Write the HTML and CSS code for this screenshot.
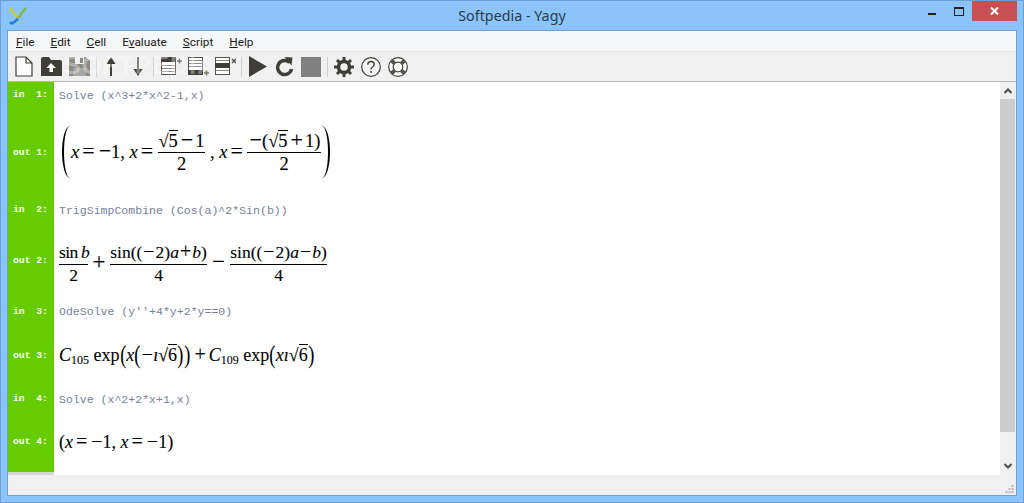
FILE: index.html
```html
<!DOCTYPE html>
<html lang="en">
<head>
<meta charset="utf-8">
<title>Softpedia - Yagy</title>
<link rel="stylesheet" href="styles.css">
</head>
<body>
<div class="window">
  <header class="titlebar">
    <svg class="app-icon" width="18" height="18" viewBox="0 0 18 18">
      <g fill="#d2c81f"><circle cx="2" cy="2.500" r="1.600"/><circle cx="4" cy="5" r="1.600"/><circle cx="6" cy="7.500" r="1.600"/><circle cx="8" cy="10" r="1.500"/></g>
      <g fill="#7db92c"><circle cx="16" cy="2" r="1.600"/><circle cx="14" cy="4.500" r="1.600"/><circle cx="12" cy="7" r="1.600"/><circle cx="10.500" cy="9.500" r="1.500"/></g>
      <g fill="#1f7fe0"><circle cx="8" cy="12.500" r="1.600"/><circle cx="6" cy="14.500" r="1.600"/><circle cx="3.500" cy="16" r="1.700"/><circle cx="1.800" cy="16" r="1.300"/></g>
    </svg>
    <span class="title">Softpedia - Yagy</span>
    <div class="controls">
      <span class="win-min"></span>
      <span class="win-max"></span>
      <span class="win-close"><svg width="9" height="8" viewBox="0 0 9 8"><path d="M1 0.500 L8 7.500 M8 0.500 L1 7.500" stroke="#fff" stroke-width="2" fill="none"/></svg></span>
    </div>
  </header>
  <div class="client">
    <nav class="menubar">
      <span><u>F</u>ile</span><span><u>E</u>dit</span><span><u>C</u>ell</span><span>E<u>v</u>aluate</span><span><u>S</u>cript</span><span><u>H</u>elp</span>
    </nav>
    <div class="toolbar">
      <svg class="tool t-new" width="18" height="21" viewBox="0 0 18 21"><path d="M1 1 H11 L17 7 V20 H1 Z M11 1 V7 H17" fill="#fff" stroke="#3f3e38" stroke-width="1.200"/></svg>
      <svg class="tool t-open" width="21" height="19" viewBox="0 0 21 19"><path d="M0 2 Q0 0 2 0 H8 L10 3 H19 Q21 3 21 5 V19 H0 Z" fill="#3f3e38"/><path d="M10 6 L15 11 H12 V15 H8.500 V11 H5.500 Z" fill="#fff"/></svg>
      <svg class="tool t-save" width="21" height="19" viewBox="0 0 21 19"><path d="M0 0 H17 L21 4 V19 H0 Z" fill="#8a8985"/><rect x="6" y="0" width="9" height="7" fill="#f0f0f0"/><rect x="11" y="1" width="3" height="5" fill="#8a8985"/><rect x="4" y="11" width="13" height="8" fill="#a8a7a3"/></svg>
      <i class="sep s1"></i>
      <svg class="tool t-up" width="10" height="19" viewBox="0 0 10 19"><path d="M5 0 L9.500 7 H6 V19 H4 V7 H0.500 Z" fill="#3f3e38"/></svg>
      <svg class="tool t-down" width="10" height="19" viewBox="0 0 10 19"><path d="M5 19 L9.500 12 H6 V0 H4 V12 H0.500 Z" fill="#3f3e38"/></svg>
      <i class="sep s2"></i>
      <svg class="tool t-a" width="21" height="19" viewBox="0 0 21 19"><rect x="0.500" y="0.500" width="14" height="17" fill="#fff" stroke="#55544e"/><rect x="0" y="0" width="15" height="5" fill="#3f3e38"/><path d="M1 8.500 H14 M1 11.500 H14 M1 14.500 H14" stroke="#8a8985"/><path d="M16 4 H21 M18.500 1.500 V6.500" stroke="#77766f" stroke-width="1.500"/></svg>
      <svg class="tool t-b" width="21" height="19" viewBox="0 0 21 19"><rect x="0.500" y="0.500" width="14" height="17" fill="#fff" stroke="#55544e"/><rect x="0" y="13" width="15" height="5" fill="#3f3e38"/><path d="M1 3.500 H14 M1 6.500 H14 M1 9.500 H14" stroke="#8a8985"/><path d="M16 16 H21 M18.500 13.500 V18.500" stroke="#77766f" stroke-width="1.500"/></svg>
      <svg class="tool t-c" width="21" height="19" viewBox="0 0 21 19"><rect x="0.500" y="0.500" width="14" height="17" fill="#fff" stroke="#55544e"/><rect x="0" y="6" width="15" height="5" fill="#3f3e38"/><path d="M1 3.500 H14 M1 13.500 H14" stroke="#8a8985"/><path d="M17 2 L21 6 M21 2 L17 6" stroke="#55544e" stroke-width="1.500"/></svg>
      <i class="sep s3"></i>
      <svg class="tool t-play" width="18" height="21" viewBox="0 0 18 21"><path d="M0 0 L18 10.500 L0 21 Z" fill="#3f3e38"/></svg>
      <svg class="tool t-redo" width="19" height="20" viewBox="0 0 19 20"><path d="M14.500 5.500 A7 7 0 1 0 16.500 12" fill="none" stroke="#3f3e38" stroke-width="3.500"/><path d="M9.500 0 L17.500 0.500 L16.500 8.500 Z" fill="#3f3e38"/></svg>
      <span class="tool t-stop"></span>
      <i class="sep s4"></i>
      <svg class="tool t-gear" width="20" height="20" viewBox="0 0 20 20"><circle cx="10" cy="10" r="5.500" fill="none" stroke="#3f3e38" stroke-width="3.500"/><g stroke="#3f3e38" stroke-width="3"><path d="M10 0 V4 M10 16 V20 M0 10 H4 M16 10 H20 M3 3 L5.800 5.800 M14.200 14.200 L17 17 M17 3 L14.200 5.800 M5.800 14.200 L3 17"/></g></svg>
      <svg class="tool t-help" width="20" height="20" viewBox="0 0 20 20"><circle cx="10" cy="10" r="9.300" fill="#fff" fill-opacity=".3" stroke="#3f3e38" stroke-width="1.200"/><path d="M6.800 7.800 Q6.800 4.500 10 4.500 Q13.200 4.500 13.200 7.300 Q13.200 9 11.500 10 Q10 10.800 10 12.600" fill="none" stroke="#3f3e38" stroke-width="1.400"/><rect x="9.200" y="14" width="1.600" height="1.800" fill="#3f3e38"/></svg>
      <svg class="tool t-ring" width="20" height="20" viewBox="0 0 20 20"><circle cx="10" cy="10" r="9.300" fill="#fff" stroke="#3f3e38" stroke-width="1.200"/><circle cx="10" cy="10" r="4.800" fill="#fff" stroke="#3f3e38" stroke-width="1.200"/><g stroke="#55544e" stroke-width="4"><path d="M3.400 3.400 L6.600 6.600 M16.600 3.400 L13.400 6.600 M3.400 16.600 L6.600 13.400 M16.600 16.600 L13.400 13.400"/></g></svg>
      <span class="watermark">SOFTPEDIA</span>
    </div>
    <div class="content">
      <div class="sheet">
        <div class="cells">
          <div class="cell h-in1"><span class="tag">in&nbsp;&nbsp;1:</span><code>Solve (x^3+2*x^2-1,x)</code></div>
          <div class="cell h-out1"><span class="tag">out 1:</span>
            <div class="math m1">
              <span class="paren paren-l"></span>
              <span class="run r1"><i>x</i><b class="o">=</b><b class="o u">−</b>1, <i>x</i><b class="o">=</b></span>
              <span class="frac f1"><span class="num"><span class="rad">√<span class="over">5</span></span><b class="o">−</b>1</span><span class="den">2</span></span>
              <span class="run r2">, <i>x</i><b class="o">=</b></span>
              <span class="frac f2"><span class="num"><b class="o u">−</b>(<span class="rad">√<span class="over">5</span></span><b class="o">+</b>1)</span><span class="den">2</span></span>
              <span class="paren paren-r"></span>
            </div>
          </div>
          <div class="cell h-in2"><span class="tag">in&nbsp;&nbsp;2:</span><code>TrigSimpCombine (Cos(a)^2*Sin(b))</code></div>
          <div class="cell h-out2"><span class="tag">out 2:</span>
            <div class="math m2">
              <span class="frac f3"><span class="num">sin <i>b</i></span><span class="den">2</span></span>
              <span class="op"><b class="o">+</b></span>
              <span class="frac f4"><span class="num">sin((<b class="o u">−</b>2)<i>a</i><b class="o">+</b><i>b</i>)</span><span class="den">4</span></span>
              <span class="op op2"><b class="o">−</b></span>
              <span class="frac f4"><span class="num">sin((<b class="o u">−</b>2)<i>a</i><b class="o">−</b><i>b</i>)</span><span class="den">4</span></span>
            </div>
          </div>
          <div class="cell h-in3"><span class="tag">in&nbsp;&nbsp;3:</span><code>OdeSolve (y''+4*y+2*y==0)</code></div>
          <div class="cell h-out3"><span class="tag">out 3:</span>
            <div class="math m3">
              <span><i>C</i><sub>105</sub> exp<span class="mid">(</span><i>x</i><span class="mid">(</span><b class="o u">−</b><i>ı</i><span class="rad">√<span class="over">6</span></span><span class="mid">)</span><span class="mid">)</span><b class="o">+</b><i>C</i><sub>109</sub> exp<span class="mid">(</span><i>xı</i><span class="rad">√<span class="over">6</span></span><span class="mid">)</span></span>
            </div>
          </div>
          <div class="cell h-in4"><span class="tag">in&nbsp;&nbsp;4:</span><code>Solve (x^2+2*x+1,x)</code></div>
          <div class="cell h-out4"><span class="tag">out 4:</span>
            <div class="math m4"><span>(<i>x</i><b class="o">=</b><b class="o u">−</b>1, <i>x</i><b class="o">=</b><b class="o u">−</b>1)</span></div>
          </div>
        </div>
        <div class="gutter-end"></div>
      </div>
      <div class="scrollbar">
        <svg class="arrow arrow-up" width="8" height="6" viewBox="0 0 8 6"><path d="M0.500 5 L4 1.500 L7.500 5" fill="none" stroke="#505050" stroke-width="2"/></svg>
        <div class="thumb"></div>
        <div class="track"></div>
        <svg class="arrow arrow-down" width="8" height="6" viewBox="0 0 8 6"><path d="M0.500 1 L4 4.500 L7.500 1" fill="none" stroke="#505050" stroke-width="2"/></svg>
      </div>
    </div>
    <footer class="statusbar">
      <svg width="9" height="9" viewBox="0 0 9 9" fill="#b8b8b8"><rect x="6.500" y="0" width="2" height="2"/><rect x="3.500" y="3" width="2" height="2"/><rect x="6.500" y="3" width="2" height="2"/><rect x="0.500" y="6" width="2" height="2"/><rect x="3.500" y="6" width="2" height="2"/><rect x="6.500" y="6" width="2" height="2"/></svg>
    </footer>
  </div>
</div>
</body>
</html>
```

FILE: styles.css
```css
* { box-sizing: border-box; }
html, body { margin: 0; height: 100%; overflow: hidden; }
body { font-family: "Noto Sans", "Liberation Sans", sans-serif; }

.window {
  width: 1024px; height: 503px;
  display: flex; flex-direction: column;
  background: #8ac4fb;
  border: 1px solid #6f9fd0;
  padding: 0 6px 6px;
}

/* title bar */
.titlebar { height: 29px; flex: none; position: relative; display: flex; }
.app-icon { position: absolute; left: 2px; top: 6px; }
.title {
  position: absolute; left: 0; right: 0; top: 5px; text-align: center;
  font-size: 14.300px; line-height: 20px; color: #2a3a4a;
}
.controls { margin-left: auto; display: flex; align-items: flex-start; position: relative; }
.win-min { width: 8px; height: 2px; background: #222; margin: 12px 18px 0 0; }
.win-max { width: 10px; height: 9px; border: 1px solid #222; border-top-width: 2px; margin: 6px 8px 0 0; }
.win-close { width: 45px; height: 20px; background: #c75050; display: flex; align-items: center; justify-content: center; }

/* client */
.client { flex: 1; min-height: 0; display: flex; flex-direction: column; border: 1px solid #6f9fd0; background: #f0f0f0; }

.menubar {
  height: 21px; flex: none; background: #f5f6f7; border-bottom: 1px solid #e6e6e6;
  display: flex; gap: 16px; padding-left: 8px;
  font-family: Roboto, "Noto Sans", sans-serif;
  font-size: 11.800px; line-height: 22px; color: #1a1a1a;
}

.toolbar { height: 30px; flex: none; display: flex; align-items: center; position: relative; border-bottom: 1px solid #b4b4b4; background: #f0f0f0; padding-left: 7px; }
.tool { flex: none; display: block; }
.sep { width: 1px; height: 20px; background: #cfcfcf; flex: none; }
.t-open { margin-left: 8px; }
.t-save { margin-left: 7px; }
.s1 { margin-left: 6px; }
.t-up { margin-left: 9px; }
.t-down { margin-left: 17px; }
.s2 { margin-left: 10px; }
.t-a { margin-left: 7px; }
.t-b { margin-left: 6px; }
.t-c { margin-left: 6px; }
.s3 { margin-left: 5px; }
.t-play { margin-left: 7px; }
.t-redo { margin-left: 8px; }
.t-stop { width: 20px; height: 20px; background: #808080; margin-left: 7px; }
.s4 { margin-left: 6px; }
.t-gear { margin-left: 6px; }
.t-help { margin-left: 7px; }
.t-ring { margin-left: 7px; }
.watermark {
  position: absolute; left: 56px; top: -1px;
  font-family: "Liberation Sans", sans-serif; font-weight: bold; font-size: 25px; line-height: 28px;
  letter-spacing: 1px; color: rgba(255,255,255,.35);
}

/* worksheet */
.content { flex: 1; min-height: 0; display: flex; background: #fff; border-right: 1px solid #f0f0f0; }
.sheet { flex: 1; min-width: 0; display: flex; flex-direction: column; }
.cells { flex: none; }
.cell { display: flex; align-items: center; }
.tag {
  width: 46px; flex: none; align-self: stretch; background: #66cc00; color: #fff;
  display: flex; align-items: center; padding-left: 5px;
  font-family: "Liberation Mono", monospace; font-weight: bold; font-size: 9.700px; white-space: pre;
}
code {
  font-family: "Liberation Mono", monospace; font-size: 11.550px; color: #77809b;
  margin-left: 5px; padding-top: 1px; white-space: pre;
}
.h-in1 { height: 25px; }
.h-out1 { height: 90px; }
.h-in2 { height: 25px; }
.h-out2 { height: 76px; }
.h-in3 { height: 26px; }
.h-out3 { height: 62px; }
.h-in4 { height: 25px; }
.h-out4 { height: 61px; }
.gutter-end { width: 46px; height: 3px; background: #d4d4d4; }

/* math */
.math {
  display: flex; align-items: center; margin-left: 5px; white-space: nowrap;
  font-family: "Liberation Serif", serif; font-size: 18.500px; line-height: 20px; color: #000;
  -webkit-text-stroke: .1px #000;
}
.o { font-weight: normal; font-size: 22px; line-height: 0; margin: 0 2px 0 3px; }
.u { margin: 0 0 0 2px; }
.frac { display: flex; flex-direction: column; align-items: center; flex: none; }
.num { padding-bottom: 1px; border-bottom: 1px solid #000; align-self: stretch; text-align: center; }
.den { padding-top: 1px; }
.m1 { margin-left: 8px; }
.run { flex: none; }
.r1 { width: 87px; }
.r2 { width: 42px; padding-left: 5px; }
.f1 { width: 47px; }
.f2 { width: 74px; }
.f3 { width: 29px; }
.f3 .num { letter-spacing: -.6px; word-spacing: -.5px; }
.f4 { width: 97px; }
.m2 { font-size: 17.500px; margin-top: 6px; }
.m2 .o { font-size: 20px; margin: 0 1px; }
.m2 .num { padding-bottom: 2px; }
.m2 .den { padding-top: 0; }
.m2 .op .o { font-size: 23px; margin: 0; }
.op { width: 22px; text-align: center; }
.op2 { width: 23px; }
.paren { flex: none; width: 8px; height: 52px; }
.paren-l { border-left: 2px solid #000; border-radius: 100% 0 0 100% / 50% 0 0 50%; margin-right: 1px; }
.paren-r { border-right: 2px solid #000; border-radius: 0 100% 100% 0 / 0 50% 50% 0; margin-left: 1px; }
.rad { white-space: nowrap; }
.over { border-top: 1px solid #000; }
.m3 { font-size: 18px; }
.m3 .o { font-size: 20px; margin: 0 3px 0 4px; }
.m3 .u { margin: 0 0 0 1px; }
.mid { display: inline-block; font-size: 26px; line-height: 20px; transform: scaleX(.7); margin: 0 -1px; vertical-align: -2px; }
.m4 { font-size: 18px; }
.m4 .o { font-size: 20px; margin: 0 2px 0 3px; }
.m4 .u { margin: 0 0 0 2px; }
sub { font-size: 12px; line-height: 0; vertical-align: -3px; }

/* scrollbar */
.scrollbar { width: 15px; flex: none; display: flex; flex-direction: column; align-items: center; background: #f0f0f0; }
.arrow { flex: none; }
.arrow-up { margin: 6px 0 5px; }
.arrow-down { margin: 6px 0; }
.thumb { width: 100%; height: 333px; background: #cdcdcd; flex: none; }
.track { flex: 1; }

.statusbar { height: 20px; flex: none; background: #f0f0f0; display: flex; justify-content: flex-end; align-items: flex-end; padding: 0 2px 1px 0; }
```
